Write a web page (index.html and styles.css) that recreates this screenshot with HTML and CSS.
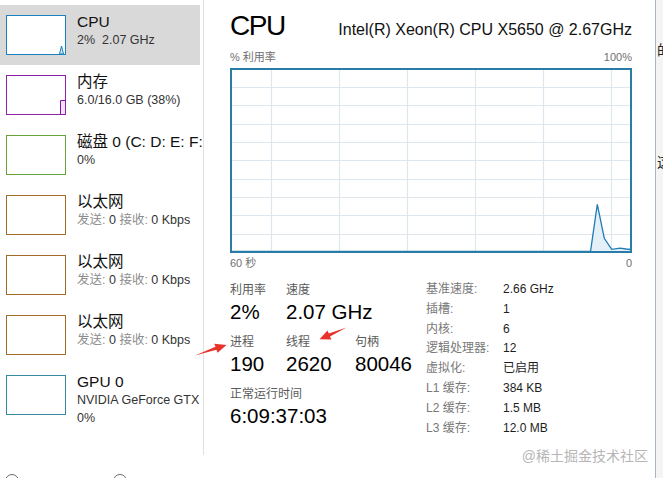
FILE: index.html
```html
<!DOCTYPE html>
<html lang="zh-CN">
<head>
<meta charset="utf-8">
<title>任务管理器 - CPU</title>
<link rel="stylesheet" href="styles.css">
</head>
<body>
<div class="window">
  <div class="content">
    <aside class="sidebar">
      <div class="item selected">
        <div class="thumb thumb-cpu">
          <svg width="58" height="38" viewBox="0 0 58 38"><path d="M52.5,38 L54.5,30 L56.5,38 Z" fill="#d6e8f4" stroke="#117dbb" stroke-width="1"/></svg>
        </div>
        <div class="info"><div class="title">CPU</div><div class="sub">2%&nbsp; 2.07 GHz</div></div>
      </div>
      <div class="item">
        <div class="thumb thumb-mem">
          <svg width="58" height="38" viewBox="0 0 58 38"><path d="M53.5,38 L53.5,24.5 L58,24.5 L58,38 Z" fill="#f0e2f4"/><path d="M53.5,38 L53.5,24.5 L58,24.5" fill="none" stroke="#8b12ae" stroke-width="1"/></svg>
        </div>
        <div class="info"><div class="title">内存</div><div class="sub">6.0/16.0 GB (38%)</div></div>
      </div>
      <div class="item">
        <div class="thumb thumb-disk"></div>
        <div class="info"><div class="title">磁盘 0 (C: D: E: F:</div><div class="sub">0%</div></div>
      </div>
      <div class="item">
        <div class="thumb thumb-eth"></div>
        <div class="info"><div class="title">以太网</div><div class="sub"><span class="dim">发送:</span> 0 <span class="dim">接收:</span> 0 Kbps</div></div>
      </div>
      <div class="item">
        <div class="thumb thumb-eth"></div>
        <div class="info"><div class="title">以太网</div><div class="sub"><span class="dim">发送:</span> 0 <span class="dim">接收:</span> 0 Kbps</div></div>
      </div>
      <div class="item">
        <div class="thumb thumb-eth"></div>
        <div class="info"><div class="title">以太网</div><div class="sub"><span class="dim">发送:</span> 0 <span class="dim">接收:</span> 0 Kbps</div></div>
      </div>
      <div class="item">
        <div class="thumb thumb-gpu"></div>
        <div class="info"><div class="title">GPU 0</div><div class="sub">NVIDIA GeForce GTX</div><div class="sub">0%</div></div>
      </div>
    </aside>

    <main class="detail">
      <div class="head">
        <div class="big">CPU</div>
        <div class="model">Intel(R) Xeon(R) CPU X5650 @ 2.67GHz</div>
      </div>
      <div class="axis axis-top"><span>% 利用率</span><span>100%</span></div>
      <svg class="chart" width="402" height="185" viewBox="0 0 402 185">
        <g stroke="#dfe7ee" stroke-width="1.2">
          <line x1="2" y1="19.5" x2="400" y2="19.5"/>
          <line x1="2" y1="37.5" x2="400" y2="37.5"/>
          <line x1="2" y1="56.5" x2="400" y2="56.5"/>
          <line x1="2" y1="74.5" x2="400" y2="74.5"/>
          <line x1="2" y1="92.5" x2="400" y2="92.5"/>
          <line x1="2" y1="111.5" x2="400" y2="111.5"/>
          <line x1="2" y1="129.5" x2="400" y2="129.5"/>
          <line x1="2" y1="147.5" x2="400" y2="147.5"/>
          <line x1="2" y1="166.5" x2="400" y2="166.5"/>
          <line x1="41.5" y1="2" x2="41.5" y2="183"/>
          <line x1="109.5" y1="2" x2="109.5" y2="183"/>
          <line x1="177.5" y1="2" x2="177.5" y2="183"/>
          <line x1="245.5" y1="2" x2="245.5" y2="183"/>
          <line x1="313.5" y1="2" x2="313.5" y2="183"/>
          <line x1="381.5" y1="2" x2="381.5" y2="183"/>
        </g>
        <path d="M360.5,184 L367.3,136.3 L374.3,170.3 L381.7,181.3 L390,180.2 L396,181 L401,181.5 L401,184 Z" fill="#e4eff7"/>
        <polyline points="2,183.5 360.5,183.5 367.3,136.3 374.3,170.3 381.7,181.3 390,180.2 396,181 401,181.5" fill="none" stroke="#1b7db5" stroke-width="1.3"/>
        <rect x="1" y="1" width="400" height="183" fill="none" stroke="#2a7ca8" stroke-width="2"/>
      </svg>
      <div class="axis axis-bottom"><span>60 秒</span><span>0</span></div>

      <div class="stats">
        <div class="live">
          <div class="stat"><div class="label">利用率</div><div class="value">2%</div></div>
          <div class="stat stat-wide"><div class="label">速度</div><div class="value">2.07 GHz</div></div>
          <div class="stat"><div class="label">进程</div><div class="value">190</div></div>
          <div class="stat"><div class="label">线程</div><div class="value">2620</div></div>
          <div class="stat"><div class="label">句柄</div><div class="value">80046</div></div>
          <div class="stat stat-full"><div class="label">正常运行时间</div><div class="value">6:09:37:03</div></div>
        </div>
        <dl class="spec">
          <dt>基准速度:</dt><dd>2.66 GHz</dd>
          <dt>插槽:</dt><dd>1</dd>
          <dt>内核:</dt><dd>6</dd>
          <dt>逻辑处理器:</dt><dd>12</dd>
          <dt>虚拟化:</dt><dd>已启用</dd>
          <dt>L1 缓存:</dt><dd>384 KB</dd>
          <dt>L2 缓存:</dt><dd>1.5 MB</dd>
          <dt>L3 缓存:</dt><dd>12.0 MB</dd>
        </dl>
      </div>
      <div class="watermark">@稀土掘金技术社区</div>
    </main>

    <footer class="footer">
      <span class="ring"></span>
      <span class="ring ring-second"></span>
    </footer>
  </div>

  <div class="edge">
    <span class="edge-text edge-first">的</span>
    <span class="edge-text edge-second">这</span>
  </div>

  <svg class="arrows" width="663" height="478" viewBox="0 0 663 478">
    <polygon points="195,355.5 216.4,349.7 217.6,352.8 226.5,345 214.3,343.8 215.5,346.8" fill="#e8322a"/>
    <polygon points="346.5,327.6 330,336.4 331.4,339.4 319.5,339.2 327.5,330.6 328.8,333.4" fill="#e8322a"/>
  </svg>
</div>
</body>
</html>
```

FILE: styles.css
```css
html, body {
  margin: 0;
  padding: 0;
}

body {
  width: 663px;
  height: 478px;
  overflow: hidden;
  background: #ffffff;
  color: #000000;
  font-family: "Liberation Sans", "Noto Sans CJK SC", sans-serif;
}

.window {
  position: relative;
  display: flex;
  height: 478px;
}

.content {
  width: 655px;
  flex: none;
  display: grid;
  grid-template-columns: 204px 1fr;
  grid-template-rows: 455px 23px;
}

/* ---------- sidebar ---------- */
.sidebar {
  grid-column: 1;
  grid-row: 1;
  box-sizing: border-box;
  border-right: 1px solid #e1e1e1;
  padding-top: 5px;
  overflow: hidden;
}

.item {
  width: 200px;
  height: 60px;
  box-sizing: border-box;
  padding: 10px 0 0 6px;
  display: flex;
}

.item.selected {
  background: #d9d9d9;
}

.thumb {
  width: 60px;
  height: 40px;
  box-sizing: border-box;
  border: 1px solid #999;
  background: #ffffff;
  flex: none;
}

.thumb svg {
  display: block;
}

.thumb-cpu { border-color: #1a82bf; }
.thumb-mem { border-color: #8b22a8; }
.thumb-disk { border-color: #66a23a; }
.thumb-eth { border-color: #a06a28; }
.thumb-gpu { border-color: #3589a0; }

.info {
  margin-left: 11px;
  margin-top: -3px;
  white-space: nowrap;
}

.title {
  font-size: 15.5px;
  line-height: 19px;
  color: #111;
}

.sub {
  font-size: 12.5px;
  line-height: 18px;
  color: #333;
}

.dim {
  color: #8c8c8c;
}

/* ---------- detail ---------- */
.detail {
  grid-column: 2;
  grid-row: 1 / span 2;
  position: relative;
  box-sizing: border-box;
  padding: 11px 23px 0 26px;
}

.head {
  display: flex;
  justify-content: space-between;
  align-items: baseline;
  height: 30px;
}

.big {
  font-size: 28px;
  line-height: 30px;
  letter-spacing: -1.5px;
  color: #000;
}

.model {
  font-size: 16px;
  line-height: 20px;
  color: #111;
}

.axis {
  display: flex;
  justify-content: space-between;
  font-size: 11px;
  line-height: 14px;
  color: #707070;
}

.axis-top {
  margin-top: 9px;
  margin-bottom: 4px;
}

.axis-bottom {
  margin-top: 3px;
}

.chart {
  display: block;
}

.stats {
  display: flex;
  margin-top: 10px;
}

.live {
  width: 196px;
  flex: none;
  padding-top: 2px;
  display: grid;
  grid-template-columns: 56px 69px auto;
  row-gap: 9px;
  align-content: start;
}

.stat-wide {
  grid-column: 2 / span 2;
}

.stat-full {
  grid-column: 1 / span 3;
}

.label {
  font-size: 12px;
  line-height: 16px;
  color: #5a5a5a;
}

.value {
  font-size: 20.5px;
  line-height: 27px;
  color: #000;
  white-space: nowrap;
}

.spec {
  margin: 0;
  display: grid;
  grid-template-columns: 77px auto;
  font-size: 12px;
  line-height: 19.8px;
}

.spec dt {
  margin: 0;
  color: #787878;
}

.spec dd {
  margin: 0;
  color: #1e1e1e;
}

.watermark {
  position: absolute;
  right: 7px;
  top: 446px;
  font-size: 14px;
  line-height: 20px;
  color: #b6b6b6;
  white-space: nowrap;
}

/* ---------- footer ---------- */
.footer {
  grid-column: 1;
  grid-row: 2;
  display: flex;
  padding: 19px 0 0 5px;
  gap: 94px;
}

.ring {
  width: 14px;
  height: 14px;
  box-sizing: border-box;
  border: 1px solid #6a6a6a;
  border-radius: 50%;
}

/* ---------- edge ---------- */
.edge {
  width: 8px;
  flex: none;
  box-sizing: border-box;
  border-left: 1px solid #a8b6c4;
  background: #f4f4f4;
  overflow: hidden;
  padding-top: 43px;
}

.edge-text {
  display: block;
  font-size: 14px;
  line-height: 14px;
  color: #222;
  white-space: nowrap;
  margin-left: 1px;
}

.edge-second {
  margin-top: 98px;
}

.arrows {
  position: absolute;
  left: 0;
  top: 0;
  pointer-events: none;
}
```
